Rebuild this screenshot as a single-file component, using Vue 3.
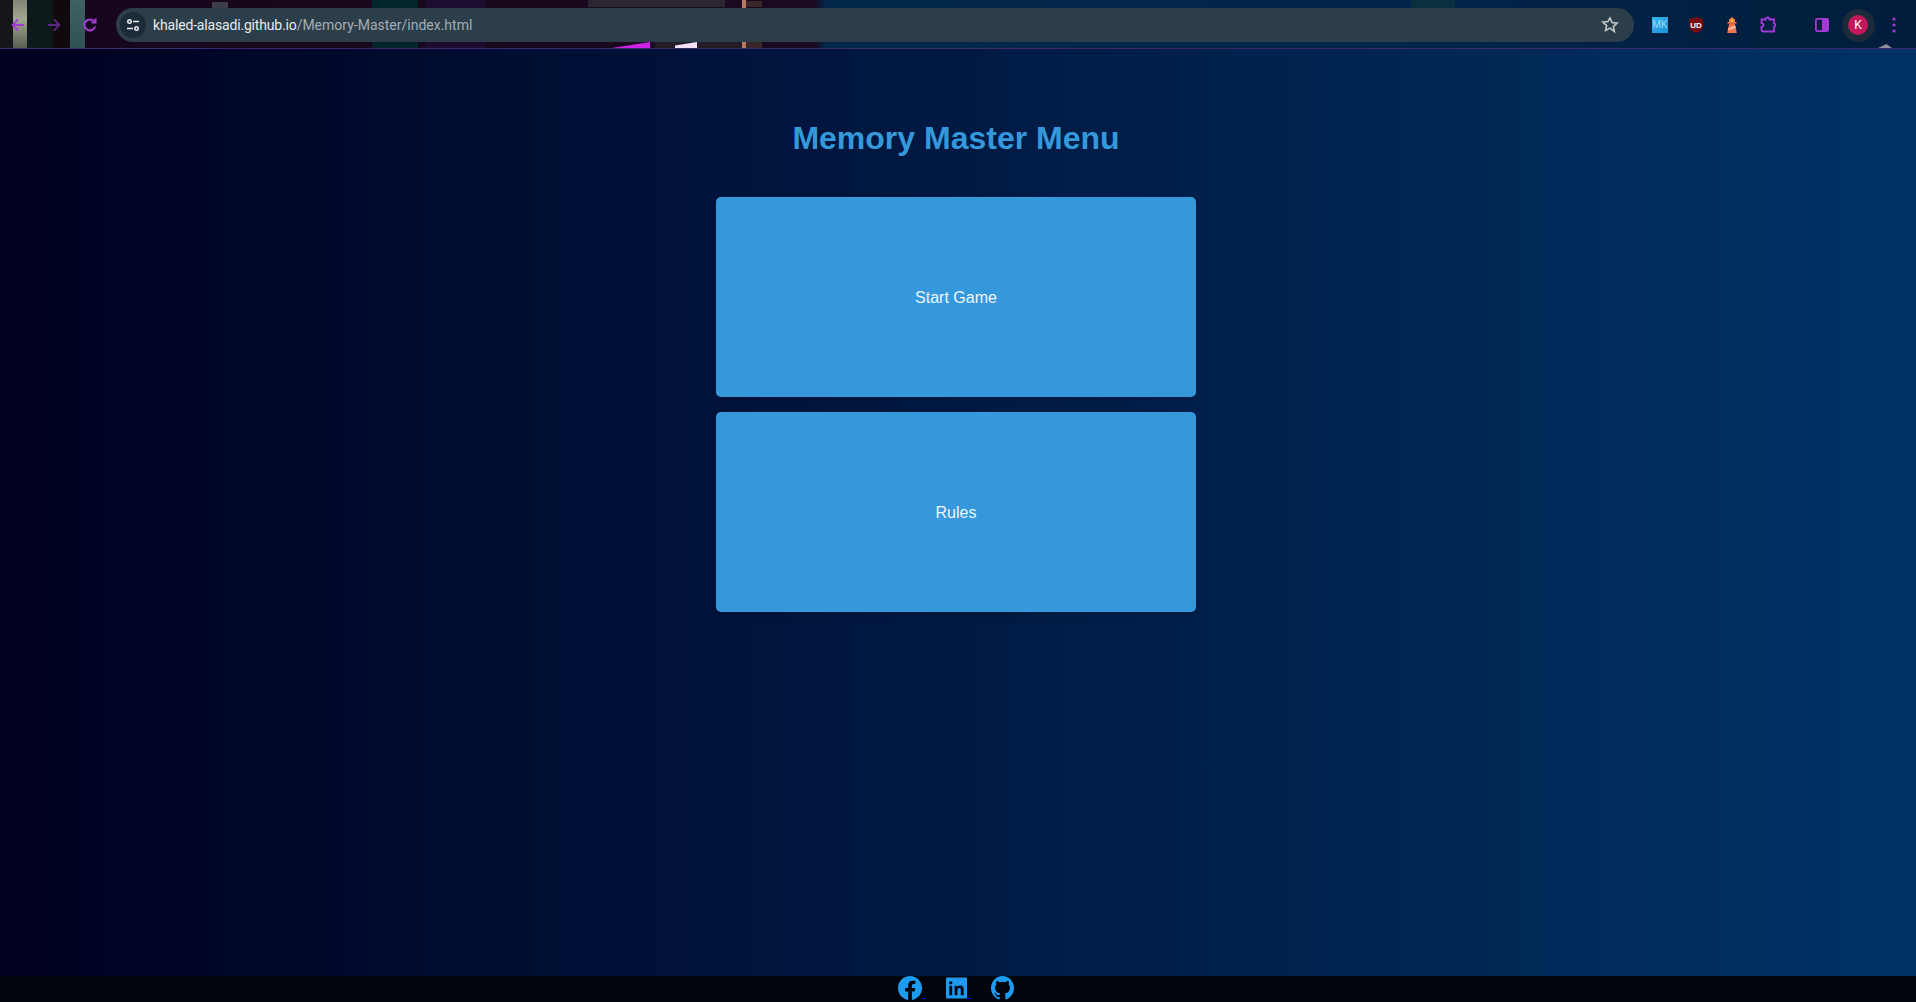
<script setup>
// Memory Master landing menu, shown inside a themed browser window
const menuItems = ['Start Game', 'Rules']

// wallpaper scraps that show through the browser toolbar
const scraps = [
  { x: 0, w: 13, y: 0, h: 48, c: '#15161a' },
  { x: 13, w: 14, y: 0, h: 48, c: 'linear-gradient(#7f8474, #a3a894 40%, #596052)' },
  { x: 27, w: 26, y: 0, h: 48, c: '#0d1a1c' },
  { x: 53, w: 17, y: 0, h: 48, c: '#12090f' },
  { x: 70, w: 15, y: 0, h: 48, c: 'linear-gradient(#3f6264, #2f5153)' },
  { x: 85, w: 125, y: 0, h: 48, c: '#16071c' },
  { x: 212, w: 16, y: 2, h: 6, c: '#3c3c48' },
  { x: 372, w: 46, y: 0, h: 48, c: '#05252c' },
  { x: 425, w: 60, y: 0, h: 48, c: '#1c0c30' },
  { x: 588, w: 137, y: 0, h: 7, c: '#2b2630' },
  { x: 655, w: 90, y: 42, h: 6, c: '#241c26' },
  { x: 742, w: 4, y: 0, h: 48, c: '#b87a60' },
  { x: 746, w: 16, y: 1, h: 6, c: '#3a2628' },
  { x: 746, w: 16, y: 42, h: 6, c: '#3a2628' },
  { x: 1411, w: 44, y: 0, h: 8, c: '#08303f' }
]

function scrapStyle(s) {
  return { left: s.x + 'px', top: s.y + 'px', width: s.w + 'px', height: s.h + 'px', background: s.c }
}
</script>

<template>
  <div class="window">
    <header class="toolbar">
      <div class="wall">
        <i v-for="s in scraps" :key="s.x + '-' + s.y" :style="scrapStyle(s)"></i>
        <b class="magenta"></b>
        <b class="flare"></b>
        <b class="peak"></b>
      </div>

      <div class="nav">
        <svg width="20" height="20" viewBox="0 0 20 20" fill="none" stroke="#a43bd8" stroke-width="1.800">
          <path d="M16 10H5M10 4.500 4.500 10l5.500 5.500" />
        </svg>
        <svg width="20" height="20" viewBox="0 0 20 20" fill="none" stroke="#5c2a80" stroke-width="1.800">
          <path d="M4 10h11M10 4.500l5.500 5.500-5.500 5.500" />
        </svg>
        <svg width="20" height="20" viewBox="0 0 20 20" fill="none" stroke="#a43bd8" stroke-width="2">
          <path d="M15.200 11.500a5.500 5.500 0 1 1-.8-4.800" />
          <path d="M15.500 3.500v4h-4" />
        </svg>
      </div>

      <div class="omnibox">
        <span class="site-info">
          <svg width="16" height="16" viewBox="0 0 16 16" fill="none" stroke="#e8eaed" stroke-width="1.600">
            <circle cx="4.500" cy="4.500" r="1.700" />
            <path d="M8 4.500h6M2 11.500h6" />
            <circle cx="11.500" cy="11.500" r="1.700" />
          </svg>
        </span>
        <span class="url"><span class="host">khaled-alasadi.github.io</span>/Memory-Master/index.html</span>
        <svg width="20" height="20" viewBox="0 0 20 20" fill="none" stroke="#c4c7c5" stroke-width="1.600">
          <path d="M10 3l2.100 4.600 5 .6-3.700 3.400 1 4.900L10 13.100l-4.400 2.400 1-4.900-3.700-3.400 5-.6z" />
        </svg>
      </div>

      <div class="extensions">
        <span class="cell"><span class="ext-mk">MK</span></span>
        <span class="cell">
          <svg width="18" height="18" viewBox="0 0 18 18">
            <path d="M9 1l7 2v6.500c0 3.600-3.200 6.300-7 7.500-3.800-1.200-7-3.900-7-7.500V3z" fill="#7a0b12" />
            <text x="9" y="11.500" text-anchor="middle" class="ub">UD</text>
          </svg>
        </span>
        <span class="cell">
          <svg width="18" height="18" viewBox="0 0 18 18">
            <path d="M9 1l3 2.500v2.500H6V3.500z" fill="#f27a3c" />
            <circle cx="9" cy="4.600" r="1.200" fill="#ffd24a" />
            <rect x="4.500" y="6" width="9" height="1.600" fill="#f4734c" />
            <path d="M6.200 7.600h5.600L13.800 17H4.200z" fill="#f4734c" />
            <path d="M5.400 12l7-2.500.5 2.500-8 2.500z" fill="#f9b49a" />
          </svg>
        </span>
        <span class="cell">
          <svg width="20" height="20" viewBox="0 0 20 20" fill="none" stroke="#a43bd8" stroke-width="1.800">
            <path d="M3.500 4.500h4a2 2 0 0 1 4 0h4.500v3.600a2 2 0 0 1 0 3.800v4.600H5a1.500 1.500 0 0 1-1.500-1.500V12a2 2 0 0 0 0-4z" />
          </svg>
        </span>
      </div>

      <div class="profile">
        <span class="cell">
          <svg width="20" height="20" viewBox="0 0 20 20">
            <rect x="3.900" y="3.900" width="12.200" height="12.200" rx="1.500" fill="none" stroke="#a43bd8" stroke-width="1.800" />
            <rect x="10" y="3.500" width="6.500" height="13" rx="1" fill="#a43bd8" />
          </svg>
        </span>
        <span class="cell"><span class="avatar-wrap"><span class="avatar">K</span></span></span>
        <span class="cell">
          <svg width="12" height="20" viewBox="0 0 12 20" fill="#a43bd8">
            <circle cx="6" cy="4" r="1.600" />
            <circle cx="6" cy="10" r="1.600" />
            <circle cx="6" cy="16" r="1.600" />
          </svg>
        </span>
      </div>
    </header>

    <main class="page">
      <h1>Memory Master Menu</h1>
      <div class="menu">
        <button v-for="item in menuItems" :key="item" type="button">{{ item }}</button>
      </div>
    </main>

    <footer class="social">
      <a class="link">
        <svg width="24" height="24" viewBox="0 0 24 24">
          <path fill="#1d9bf0" d="M24 12.070C24 5.400 18.630 0 12 0S0 5.400 0 12.070c0 6.020 4.390 11.020 10.130 11.930v-8.440H7.080v-3.490h3.050V9.410c0-3.030 1.790-4.700 4.530-4.700 1.310 0 2.680.23 2.680.23v2.970h-1.510c-1.490 0-1.960.93-1.960 1.880v2.280h3.330l-.53 3.490h-2.800V24C19.610 23.090 24 18.090 24 12.070z" />
        </svg>
      </a>
      <a class="link">
        <svg width="21" height="24" viewBox="1 -.7 22 25.140">
          <path fill="#1d9bf0" d="M22 1H2C1.400 1 1 1.400 1 2v20c0 .6.400 1 1 1h20c.6 0 1-.4 1-1V2c0-.6-.4-1-1-1zM7.500 19.500h-3V9.500h3v10zM6 8.200a1.750 1.750 0 1 1 0-3.500 1.750 1.750 0 0 1 0 3.500zm13.500 11.300h-3v-4.900c0-1.200 0-2.700-1.600-2.700s-1.900 1.300-1.900 2.600v5h-3V9.500h2.900v1.400c.4-.8 1.400-1.600 2.900-1.600 3.100 0 3.700 2 3.700 4.700v5.500z" />
        </svg>
      </a>
      <a>
        <svg width="23" height="24" viewBox="0 0 24 24" preserveAspectRatio="none">
          <path fill="#1d9bf0" d="M12 0C5.370 0 0 5.370 0 12c0 5.300 3.440 9.800 8.210 11.390.6.110.82-.26.820-.58v-2.030c-3.340.73-4.040-1.610-4.040-1.610-.55-1.390-1.340-1.760-1.340-1.760-1.090-.74.080-.73.080-.73 1.200.08 1.840 1.240 1.840 1.240 1.070 1.830 2.810 1.300 3.490 1 .11-.78.42-1.310.76-1.610-2.670-.30-5.470-1.330-5.470-5.930 0-1.310.47-2.380 1.240-3.220-.12-.30-.54-1.520.12-3.180 0 0 1.010-.32 3.300 1.230a11.500 11.500 0 0 1 6 0c2.290-1.550 3.300-1.230 3.300-1.230.66 1.660.24 2.880.12 3.180.77.84 1.240 1.910 1.240 3.220 0 4.610-2.810 5.630-5.480 5.920.43.370.81 1.100.81 2.220v3.290c0 .32.220.70.830.58C20.570 21.800 24 17.300 24 12c0-6.630-5.370-12-12-12z" />
        </svg>
      </a>
    </footer>
  </div>
</template>

<style scoped>
.window {
  width: 1916px;
  height: 1002px;
  display: flex;
  flex-direction: column;
  overflow: hidden;
  font-family: "Liberation Sans", Arial, sans-serif;
}
.toolbar {
  position: relative;
  flex: none;
  height: 46px;
  padding-top: 2px;
  display: flex;
  align-items: center;
  border-bottom: 1px solid #3d2a6b;
  background: linear-gradient(90deg, #170618 0, #1a0a20 815px, #03294a 826px, #02254a 1400px, #021d3c 100%);
}
.wall {
  position: absolute;
  inset: 0;
  overflow: hidden;
}
.wall i {
  position: absolute;
}
.magenta {
  position: absolute;
  left: 612px;
  top: 42px;
  width: 38px;
  height: 6px;
  background: #d020e8;
  clip-path: polygon(100% 0, 100% 100%, 0 100%);
}
.flare {
  position: absolute;
  left: 675px;
  top: 42px;
  width: 22px;
  height: 6px;
  background: #f4e0f8;
  clip-path: polygon(100% 0, 100% 100%, 0 100%, 0 60%);
}
.peak {
  position: absolute;
  left: 1878px;
  top: 44px;
  width: 14px;
  height: 4px;
  background: #8f8ca0;
  clip-path: polygon(60% 0, 100% 100%, 0 100%);
}
.nav {
  position: relative;
  display: flex;
  align-items: center;
  gap: 16px;
  margin-left: 8px;
}
.omnibox {
  position: relative;
  flex: none;
  margin-left: 16px;
  width: 1518px;
  height: 34px;
  background: #2c3e4a;
  border-radius: 17px;
  display: flex;
  align-items: center;
  box-sizing: border-box;
  padding: 0 14px 0 4px;
}
.site-info {
  width: 26px;
  height: 26px;
  border-radius: 50%;
  background: #1b2b3a;
  display: flex;
  align-items: center;
  justify-content: center;
}
.url {
  flex: 1;
  margin-left: 7px;
  font: 14px "Roboto", "Liberation Sans", sans-serif;
  color: #a4acb2;
  white-space: nowrap;
}
.host {
  color: #e8eaed;
  letter-spacing: -0.17px;
}
.extensions {
  position: relative;
  display: flex;
  margin-left: 8px;
}
.cell {
  width: 36px;
  height: 34px;
  display: flex;
  align-items: center;
  justify-content: center;
}
.ext-mk {
  width: 16px;
  height: 16px;
  background: linear-gradient(135deg, #35b4ee, #1a92d8);
  color: #9fdcf6;
  font: 10px/16px "Liberation Sans", sans-serif;
  text-align: center;
}
.ub {
  font: bold 8px "Liberation Sans", sans-serif;
  fill: #fff;
}
.profile {
  position: relative;
  display: flex;
  margin-left: 18px;
}
.avatar-wrap {
  width: 33px;
  height: 33px;
  border-radius: 50%;
  background: #1d2a3a;
  display: flex;
  align-items: center;
  justify-content: center;
}
.avatar {
  width: 20px;
  height: 20px;
  border-radius: 50%;
  background: #c2185b;
  color: #fff;
  font: 12px/20px "Roboto", sans-serif;
  text-align: center;
}
.page {
  flex: 1;
  min-height: 0;
  box-sizing: border-box;
  padding-right: 4px;
  background: linear-gradient(90deg, #000020, #003366);
  display: flex;
  flex-direction: column;
  align-items: center;
}
h1 {
  margin: 71px 0 0;
  font-size: 32px;
  line-height: 37px;
  font-weight: 700;
  color: #3498db;
}
.menu {
  margin-top: 40px;
  display: flex;
  flex-direction: column;
  gap: 15px;
}
button {
  width: 480px;
  height: 200px;
  border: 0;
  padding: 2px 0 0;
  border-radius: 5px;
  background: #3498db;
  color: #eef6fc;
  font-family: "Liberation Sans", Arial, sans-serif;
  font-size: 16px;
  box-shadow: 0 4px 8px rgba(0, 0, 0, 0.1);
}
.social {
  flex: none;
  height: 26px;
  box-sizing: border-box;
  padding-right: 4px;
  background: #00040c;
  display: flex;
  justify-content: center;
  gap: 20px;
}
.social a {
  position: relative;
  display: block;
  height: 24px;
}
.link {
  padding-right: 4px;
}
.link::after {
  content: "";
  position: absolute;
  right: 0;
  bottom: 1px;
  width: 4px;
  height: 1px;
  background: #0000ee;
}
</style>

<style>
html, body {
  margin: 0;
  background: #000;
}
</style>
